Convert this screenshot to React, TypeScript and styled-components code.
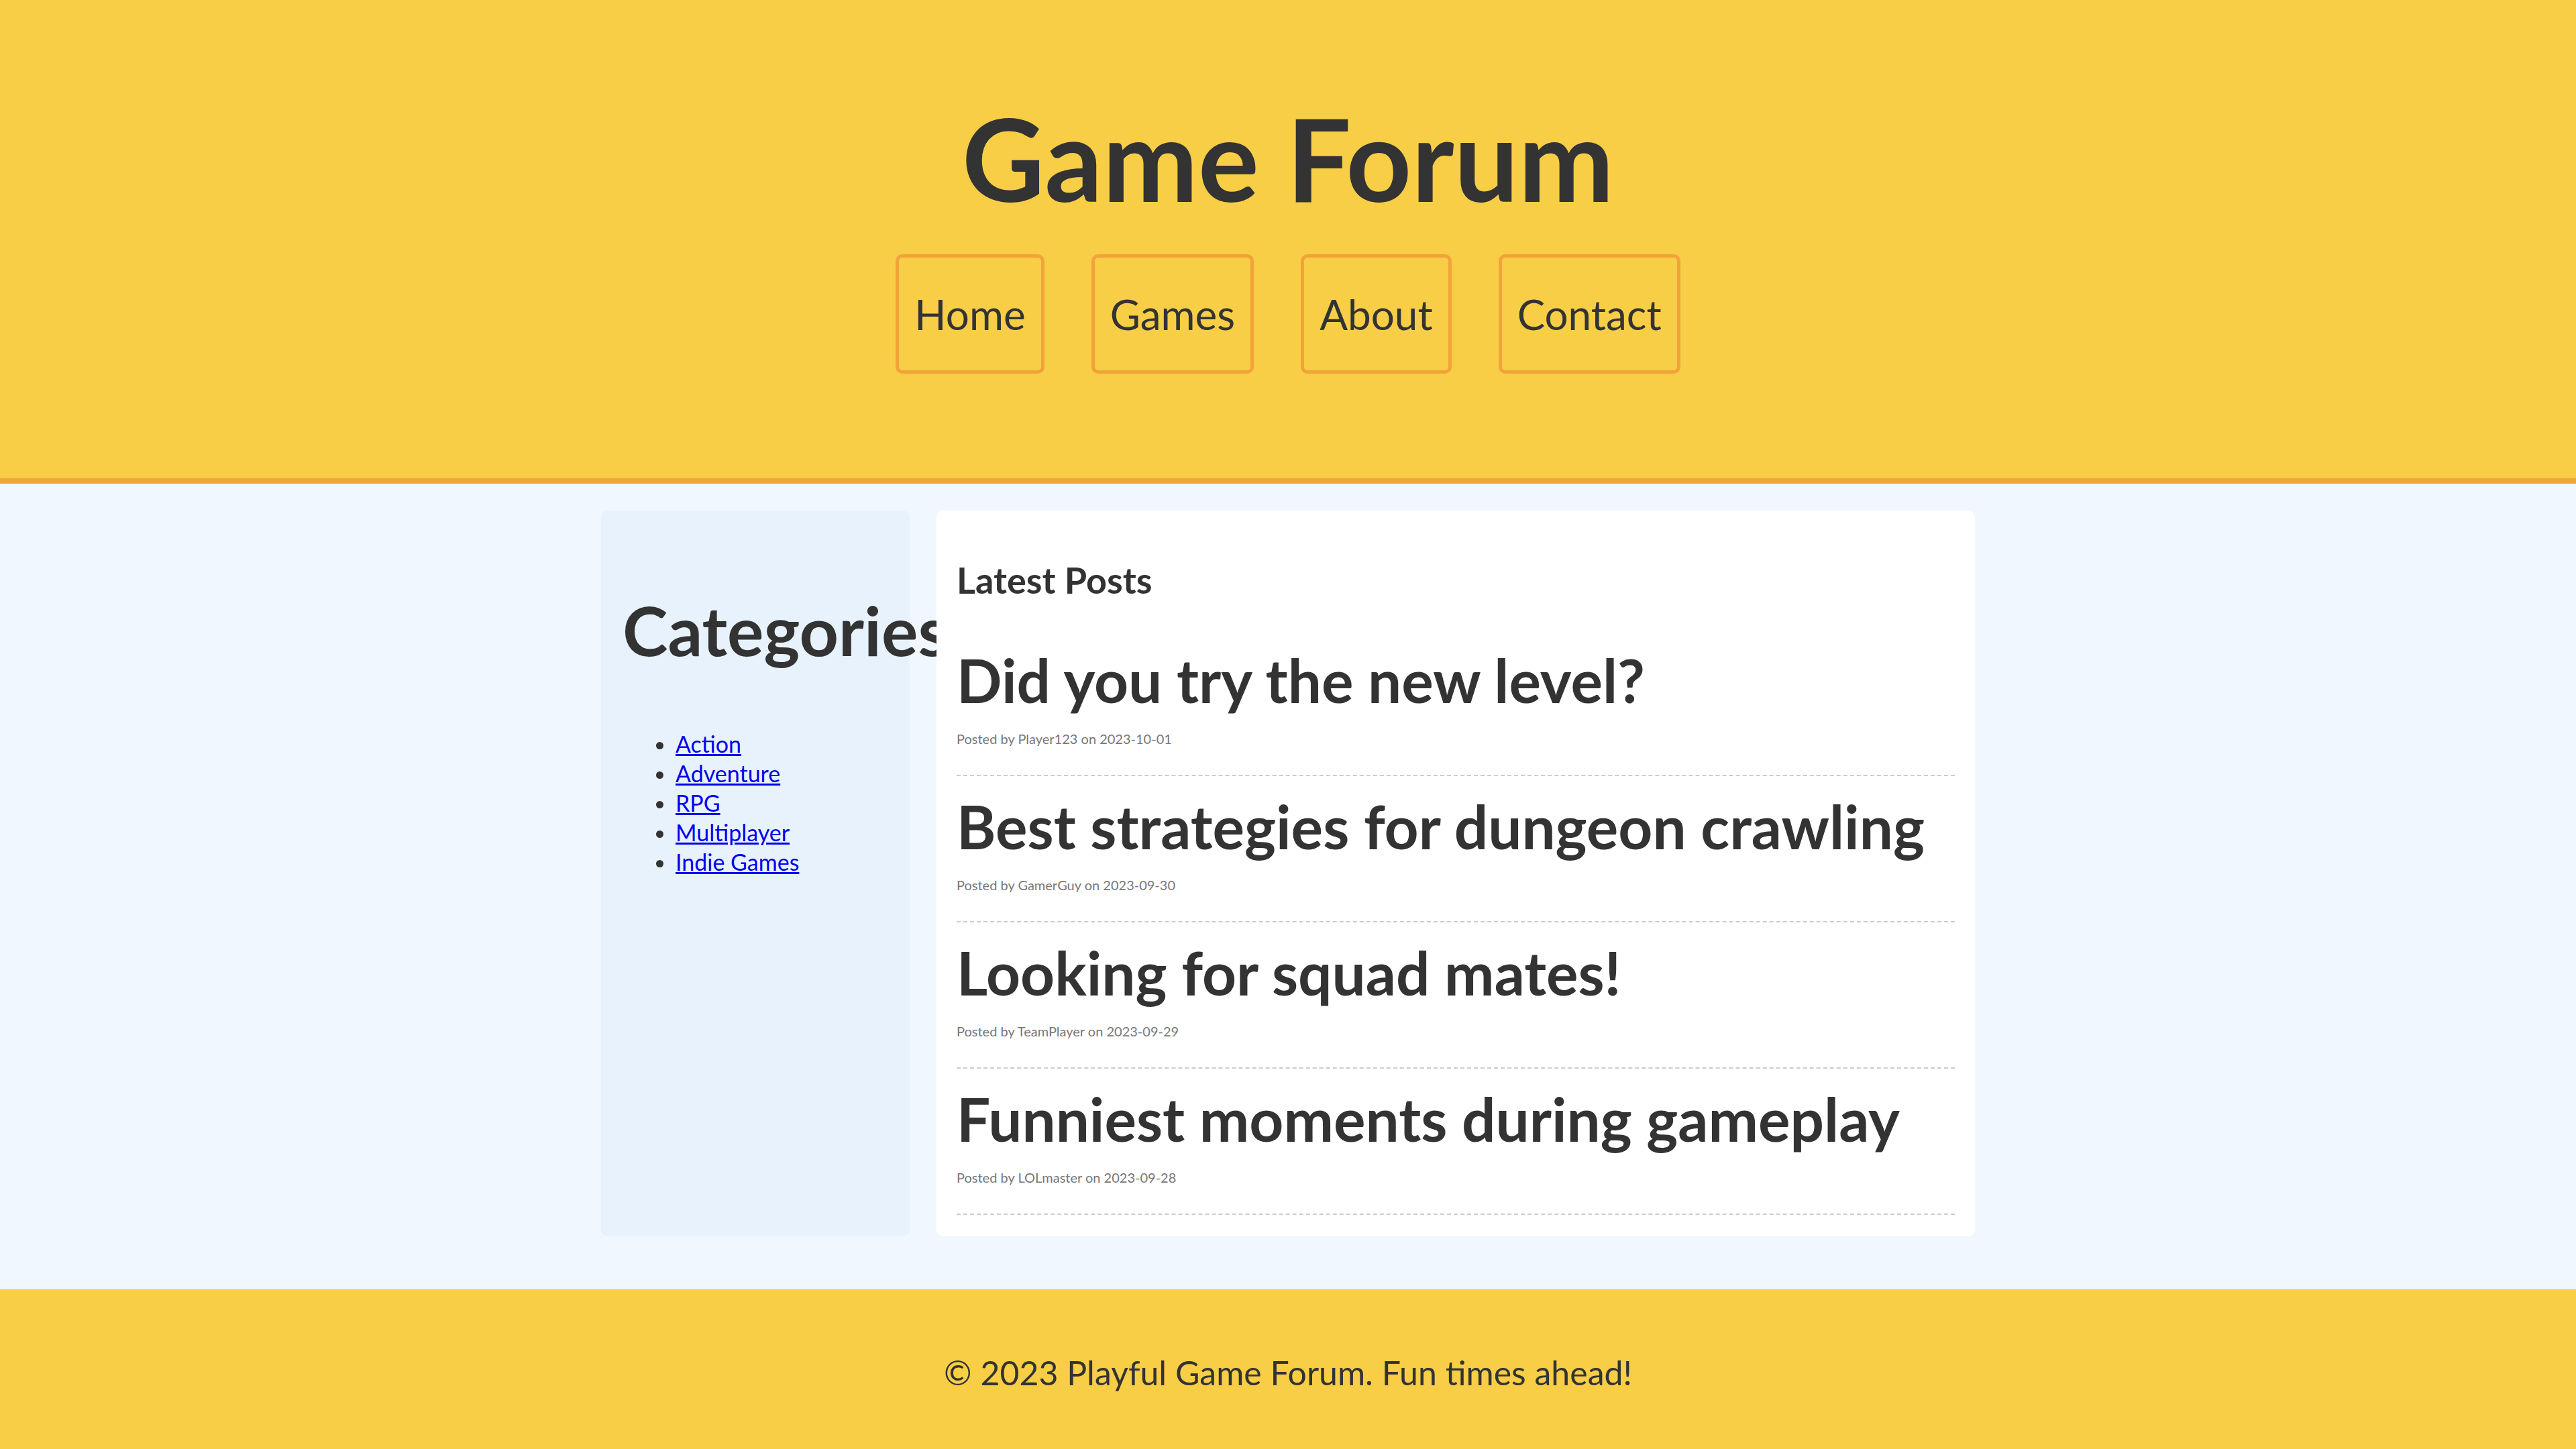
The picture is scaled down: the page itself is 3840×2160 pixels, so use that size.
import React from "react";
import styled, { createGlobalStyle } from "styled-components";

const GlobalStyle = createGlobalStyle`
  html, body {
    margin: 0;
    padding: 0;
  }
  body {
    font-family: "Comic Sans MS", "Lato", sans-serif;
    color: #333333;
    background: #f1f7ff;
  }
`;

const Page = styled.div`
  display: flex;
  flex-direction: column;
  min-height: 100vh;
`;

const Header = styled.header`
  background: #f7ce46;
  border-bottom: 8px solid #f2a33a;
  padding: 150px 0 156px;
  text-align: center;
`;

const Title = styled.h1`
  margin: 0;
  font-size: 170px;
  line-height: 1;
  font-weight: 700;
  color: #333333;
`;

const Nav = styled.nav`
  margin-top: 59px;
  display: flex;
  justify-content: center;
  gap: 70px;
`;

const NavButton = styled.a`
  display: block;
  padding: 53px 23px;
  border: 5px solid #f2a33a;
  border-radius: 10px;
  font-size: 62px;
  line-height: 1;
  color: #333333;
  text-decoration: none;
`;

const Main = styled.main`
  background: #f1f7ff;
  padding: 40px 0 79px;
`;

const Container = styled.div`
  width: 2048px;
  margin: 0 auto;
  display: flex;
  gap: 40px;
  align-items: stretch;
`;

const Sidebar = styled.aside`
  width: 460px;
  flex-shrink: 0;
  box-sizing: border-box;
  background: #e8f2fc;
  border-radius: 10px;
  padding: 32px;
`;

const SidebarTitle = styled.h2`
  margin: 95px 0 0;
  font-size: 102px;
  line-height: 1;
  font-weight: 700;
  white-space: nowrap;
`;

const CategoryList = styled.ul`
  margin: 97px 0 0;
  padding-left: 79px;
  font-size: 34px;
  line-height: 44px;
`;

const CategoryLink = styled.a`
  color: #0000ee;
  text-decoration: underline;
`;

const Content = styled.section`
  position: relative;
  flex: 1;
  background: #ffffff;
  border-radius: 10px;
  padding: 30px 30px 32px;
`;

const SectionTitle = styled.h2`
  margin: 47px 0 47px;
  font-size: 54px;
  line-height: 1;
  font-weight: 700;
`;

const Post = styled.article`
  padding: 30px 0 44px;
  border-bottom: 2px dashed #cccccc;
`;

const PostTitle = styled.h3`
  margin: 0;
  font-size: 89px;
  line-height: 1;
  font-weight: 700;
`;

const PostMeta = styled.p`
  margin: 33px 0 0;
  font-size: 20px;
  line-height: 1;
  color: #777777;
`;

const Footer = styled.footer`
  background: #f7ce46;
  text-align: center;
  padding: 99px 0 95px;
  font-size: 50px;
  line-height: 1;
  color: #333333;
`;

const navItems = ["Home", "Games", "About", "Contact"];
const categories = ["Action", "Adventure", "RPG", "Multiplayer", "Indie Games"];
const posts = [
  { title: "Did you try the new level?", author: "Player123", date: "2023-10-01" },
  { title: "Best strategies for dungeon crawling", author: "GamerGuy", date: "2023-09-30" },
  { title: "Looking for squad mates!", author: "TeamPlayer", date: "2023-09-29" },
  { title: "Funniest moments during gameplay", author: "LOLmaster", date: "2023-09-28" },
];

export default function App() {
  return (
    <Page>
      <GlobalStyle />
      <Header>
        <Title>Game Forum</Title>
        <Nav>
          {navItems.map((n) => (
            <NavButton key={n} href="#">
              {n}
            </NavButton>
          ))}
        </Nav>
      </Header>
      <Main>
        <Container>
          <Sidebar>
            <SidebarTitle>Categories</SidebarTitle>
            <CategoryList>
              {categories.map((c) => (
                <li key={c}>
                  <CategoryLink href="#">{c}</CategoryLink>
                </li>
              ))}
            </CategoryList>
          </Sidebar>
          <Content>
            <SectionTitle>Latest Posts</SectionTitle>
            {posts.map((p) => (
              <Post key={p.title}>
                <PostTitle>{p.title}</PostTitle>
                <PostMeta>
                  Posted by {p.author} on {p.date}
                </PostMeta>
              </Post>
            ))}
          </Content>
        </Container>
      </Main>
      <Footer>© 2023 Playful Game Forum. Fun times ahead!</Footer>
    </Page>
  );
}
